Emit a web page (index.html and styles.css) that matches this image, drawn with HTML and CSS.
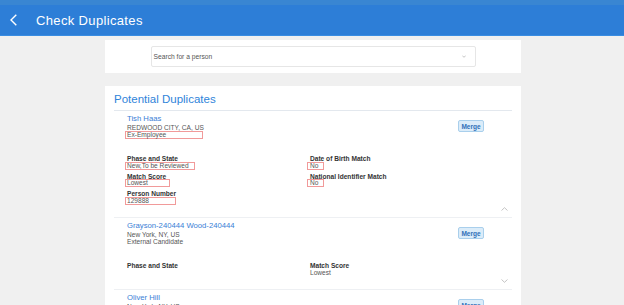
FILE: index.html
```html
<!DOCTYPE html>
<html lang="en">
<head>
    <meta charset="UTF-8">
    <title>Check Duplicates</title>
    <link rel="stylesheet" href="styles.css">
</head>
<body>
    <header class="topbar">
        <svg class="back" width="7" height="12" viewBox="0 0 7 12"><path d="M6.3 0.8 L1 6 L6.3 11.2" fill="none" stroke="#fff" stroke-width="1.4"/></svg>
        <h1 class="title">Check Duplicates</h1>
    </header>

    <main class="page">
        <section class="card search-card">
            <div class="search">
                <span>Search for a person</span>
                <svg width="4" height="3" viewBox="0 0 4 3"><path d="M0.3 0.6 L2 2.3 L3.7 0.6" fill="none" stroke="#aaa" stroke-width="0.7"/></svg>
            </div>
        </section>

        <section class="card dupes">
            <h2 class="dupes-title">Potential Duplicates</h2>

            <div class="person">
                <div class="person-head">
                    <div>
                        <div class="name">Tish Haas</div>
                        <div class="sub">REDWOOD CITY, CA, US</div>
                        <div class="sub"><span class="mark mark-ex">Ex-Employee</span></div>
                    </div>
                    <button class="merge">Merge</button>
                </div>
                <div class="fields">
                    <div>
                        <div class="label">Phase and State</div>
                        <div class="value"><span class="mark mark-phase">New,To be Reviewed</span></div>
                    </div>
                    <div>
                        <div class="label">Date of Birth Match</div>
                        <div class="value"><span class="mark mark-no">No</span></div>
                    </div>
                    <div>
                        <div class="label">Match Score</div>
                        <div class="value"><span class="mark mark-score">Lowest</span></div>
                    </div>
                    <div>
                        <div class="label">National Identifier Match</div>
                        <div class="value"><span class="mark mark-no">No</span></div>
                    </div>
                    <div>
                        <div class="label">Person Number</div>
                        <div class="value"><span class="mark mark-num">129888</span></div>
                    </div>
                </div>
                <div class="toggle">
                    <svg width="7" height="4" viewBox="0 0 7 4"><path d="M0.5 3.5 L3.5 0.7 L6.5 3.5" fill="none" stroke="#b5b5b5" stroke-width="0.8"/></svg>
                </div>
            </div>

            <div class="person">
                <div class="person-head">
                    <div>
                        <div class="name">Grayson-240444 Wood-240444</div>
                        <div class="sub">New York, NY, US</div>
                        <div class="sub">External Candidate</div>
                    </div>
                    <button class="merge">Merge</button>
                </div>
                <div class="fields">
                    <div>
                        <div class="label">Phase and State</div>
                        <div class="value"></div>
                    </div>
                    <div>
                        <div class="label">Match Score</div>
                        <div class="value">Lowest</div>
                    </div>
                </div>
                <div class="toggle">
                    <svg width="7" height="4" viewBox="0 0 7 4"><path d="M0.5 0.5 L3.5 3.3 L6.5 0.5" fill="none" stroke="#b5b5b5" stroke-width="0.8"/></svg>
                </div>
            </div>

            <div class="person">
                <div class="person-head">
                    <div>
                        <div class="name">Oliver Hill</div>
                        <div class="sub">New York, NY, US</div>
                        <div class="sub">External Candidate</div>
                    </div>
                    <button class="merge">Merge</button>
                </div>
            </div>
        </section>
    </main>
</body>
</html>
```

FILE: styles.css
```css
body{
    margin:0;
    background:#f0f0f0;
    font-family:"Liberation Sans", Arial, sans-serif;
}
.topbar{
    height:30px;
    padding:5px 0 0 10px;
    display:flex;
    align-items:center;
    background:linear-gradient(#3986d2 0, #3986d2 5px, #2d7ed7 5px);
    border-bottom:1px solid #3a8de2;
}
.back{
    display:block;
}
.title{
    margin:0 0 0 19px;
    font-size:13px;
    line-height:15px;
    font-weight:normal;
    letter-spacing:0.35px;
    color:#fff;
}
.page{
    width:416px;
    margin-left:105px;
    padding-top:4px;
}
.card{
    background:#fff;
}
.search-card{
    height:33px;
    padding-top:6px;
    box-sizing:border-box;
}
.search{
    width:325px;
    height:21px;
    box-sizing:border-box;
    margin:0 auto;
    padding:0 9px 0 2px;
    display:flex;
    align-items:center;
    justify-content:space-between;
    border:1px solid #e6e6e6;
    border-radius:2px;
    font-size:6.7px;
    color:#555;
}
.dupes{
    margin-top:13px;
    padding:6px 9px 0;
}
.dupes-title{
    margin:0;
    padding-bottom:4px;
    font-size:11.5px;
    line-height:14px;
    font-weight:normal;
    color:#2f84da;
    border-bottom:1px solid #e3e8ee;
}
.person{
    padding:3px 4px 0 13px;
    border-bottom:1px solid #eef0f3;
}
.person-head{
    display:flex;
    justify-content:space-between;
    align-items:flex-start;
}
.name{
    font-size:7.7px;
    line-height:10px;
    color:#3a80d6;
}
.sub{
    font-size:6.6px;
    line-height:7px;
    height:7px;
    color:#555;
}
.merge{
    width:26px;
    height:12px;
    margin:6px 24px 0 0;
    padding:0;
    box-sizing:border-box;
    border:1px solid #a9cfec;
    border-radius:2px;
    background:#dbecf9;
    color:#2f70b8;
    font-family:inherit;
    font-size:6.5px;
    font-weight:bold;
}
.fields{
    display:grid;
    grid-template-columns:183px 1fr;
    row-gap:3.5px;
    margin-top:17px;
}
.label{
    font-size:6.6px;
    line-height:7px;
    font-weight:bold;
    color:#333;
}
.value{
    font-size:6.6px;
    line-height:7px;
    height:7px;
    color:#555;
}
.mark{
    display:inline-block;
    vertical-align:top;
    height:8px;
    box-sizing:border-box;
    margin:-0.5px 0 0 -2px;
    padding-left:1px;
    line-height:6.5px;
    border:1px solid #f19a9a;
}
.mark-ex{ width:78px; }
.mark-phase{ width:70px; }
.mark-score{ width:45px; }
.mark-num{ width:51px; }
.mark-no{ width:17px; margin-left:-3px; padding-left:2px; }
.toggle{
    display:flex;
    justify-content:flex-end;
    padding:3px 0 6px;
}
.toggle svg{
    display:block;
}
```
